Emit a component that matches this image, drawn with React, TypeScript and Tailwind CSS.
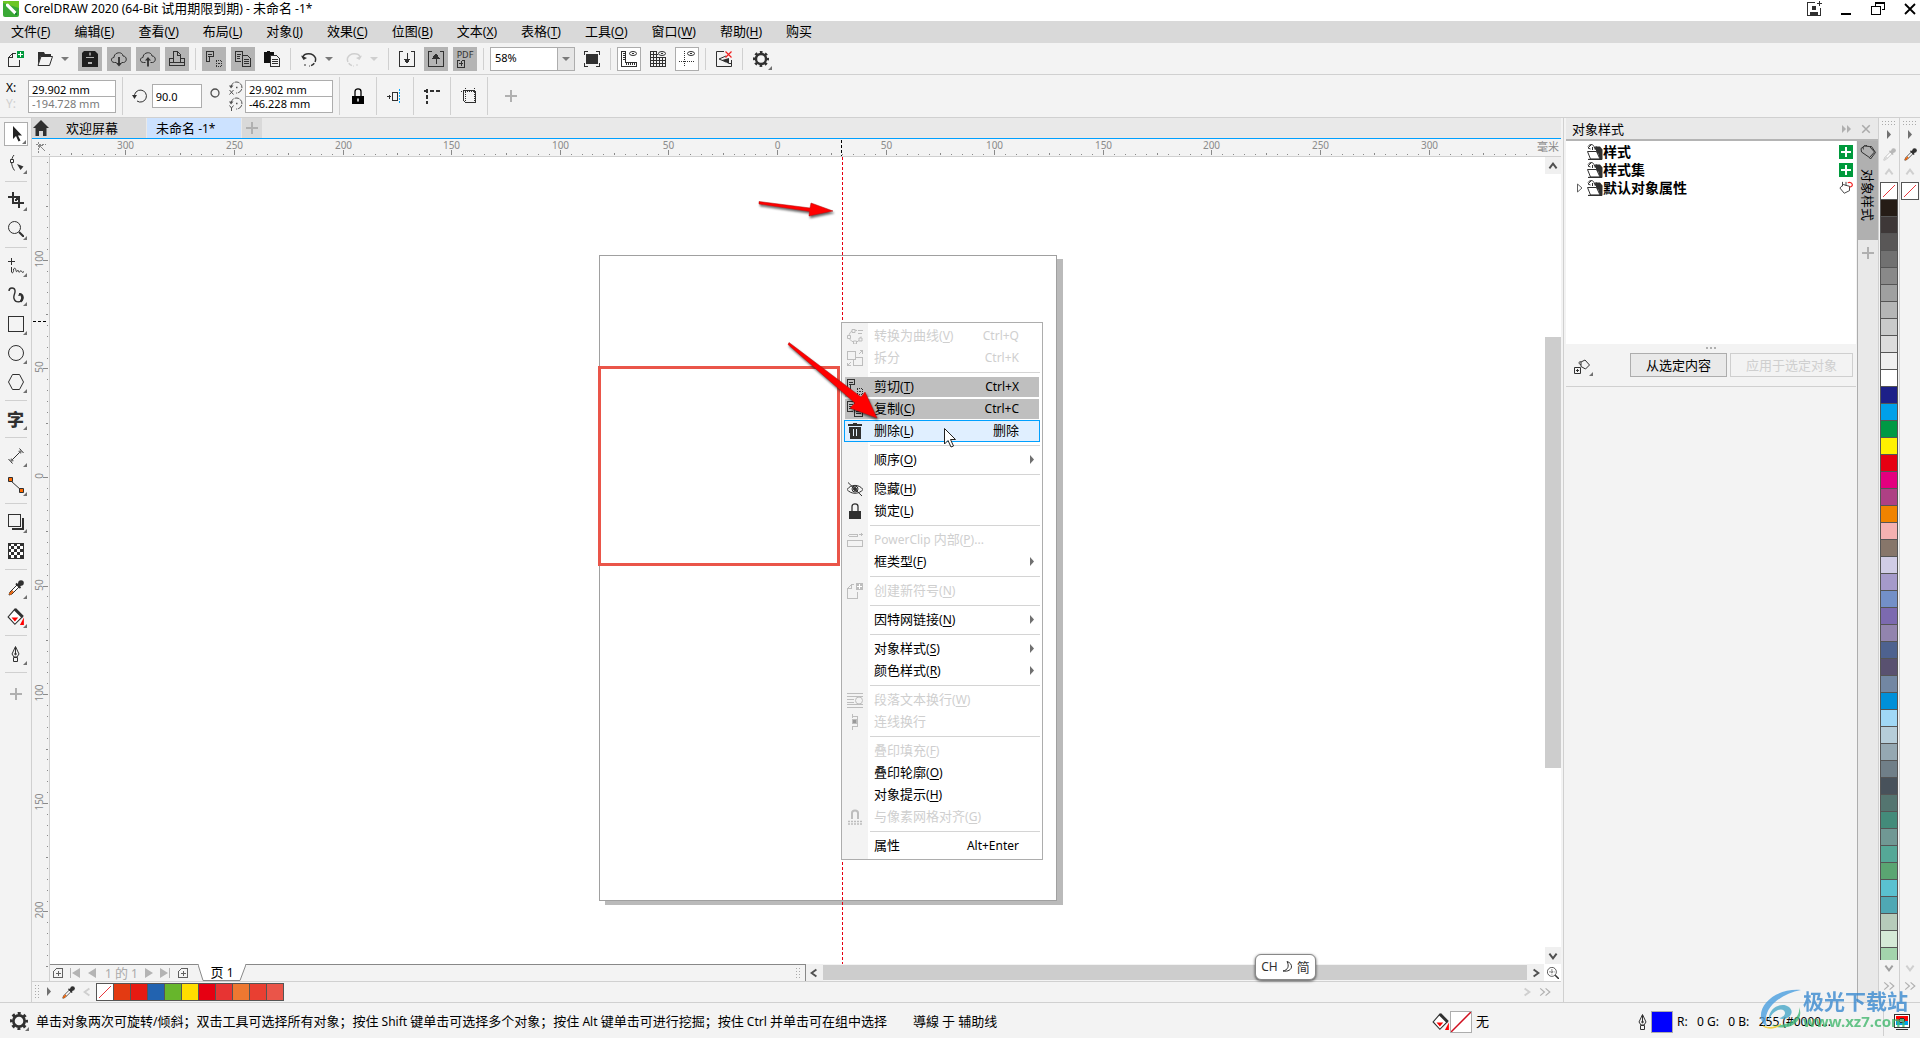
import { Fragment, type ReactNode } from "react";

const CJK = /([\u3000-\u9fff\uff00-\uffef]+)/;

const MENUS: [string, string?][] = [
  ["文件", "F"],
  ["编辑", "E"],
  ["查看", "V"],
  ["布局", "L"],
  ["对象", "J"],
  ["效果", "C"],
  ["位图", "B"],
  ["文本", "X"],
  ["表格", "T"],
  ["工具", "O"],
  ["窗口", "W"],
  ["帮助", "H"],
  ["购买"],
];

type MenuEntry = {
  label: string;
  accel?: string;
  tail?: string;
  shortcut?: string;
  icon?: ReactNode;
  state?: "disabled" | "shaded" | "active";
  submenu?: boolean;
};

const PALETTE = [
  "#251c16", "#3e3838", "#595757", "#717171", "#898989", "#9fa0a0", "#b5b6b6", "#c9caca", "#dcdcdc",
  "#efefef", "#ffffff", "#1d2088", "#00a0e9", "#009944", "#fff100", "#e60012", "#e4007f", "#ae4084",
  "#f08300", "#f4b1b1", "#87766a", "#d0cce5", "#a59aca", "#7390c8", "#7c6ab0", "#9284ae", "#4e628f",
  "#595170", "#7287a3", "#0090d9", "#a0d8f6", "#b6cdd9", "#95a8b2", "#707f88", "#48525b", "#547570",
  "#438b7a", "#709894", "#55a897", "#5aa572", "#5ac1d0", "#4fa8b4", "#b6cbba", "#d5ead7", "#a3d4ac",
];

const DOC_COLORS = ["#e33a12", "#e71a12", "#2263b0", "#67b62c", "#ffde00", "#e60012", "#e73433", "#ee7831", "#e93f32", "#ea5549"];

/* Latin runs are set one pixel smaller than the Chinese ones */
function Mixed({ text }: { text: string }) {
  return (
    <>
      {text.split(CJK).map((part, i) => (
        <span key={i} className={i % 2 ? "text-[13px]" : "text-[12px]"}>
          {part}
        </span>
      ))}
    </>
  );
}

function Accel({ label, accel, tail = "" }: { label: string; accel?: string; tail?: string }) {
  return (
    <>
      <Mixed text={label} />
      {accel && (
        <span>
          (<u className="underline-offset-2">{accel}</u>){tail}
        </span>
      )}
    </>
  );
}

function Icon({ children, size = 16, color = "#303030", crisp = false }: { children: ReactNode; size?: number; color?: string; crisp?: boolean }) {
  return (
    <svg
      width={size}
      height={size}
      viewBox="0 0 16 16"
      fill="none"
      stroke={color}
      className="block shrink-0"
      shapeRendering={crisp ? "crispEdges" : "auto"}
      aria-hidden="true"
    >
      {children}
    </svg>
  );
}

/* ---------- icons ---------- */

const CutIcon = ({ color = "#303030" }) => (
  <Icon color={color} crisp>
    <path d="M.5.5h7v5h-4v5h-3zM2 3h4M2 5h2" />
    <path d="M10 9.500h6M10.500 10v5M15.500 10v5M10 15.500h6" strokeDasharray="1 1" />
    <path d="M12 12.500h2" />
  </Icon>
);
const CopyIcon = ({ color = "#303030" }) => (
  <Icon color={color} crisp>
    <path d="M6 10.500H.5v-10h7V4M2 3.500h4M2 5.500h3M2 7.500h3" />
    <path d="M7.500 4.500h5l3 3v8h-8zM9 8.500h5M9 10.500h5M9 12.500h5" />
  </Icon>
);
const GearIcon = ({ size = 16 }: { size?: number }) => (
  <Icon size={size}>
    <circle cx="8" cy="8" r="5" strokeWidth="2.400" />
    <circle cx="8" cy="8" r="6.800" strokeWidth="2.400" strokeDasharray="2.670 2.670" strokeDashoffset="1.330" />
  </Icon>
);
const Dropper = ({ color = "#303030", tip = "#e8640c", size = 16 }) => (
  <Icon color={color} size={size}>
    <path d="M1 15 2 12l7-7 2 2-7 7z" fill="#fff" />
    <path d="M1.500 14.500 5 11" stroke={tip} strokeWidth="2.200" />
    <path d="m8 3.500 4.500 4.500" strokeWidth="1.800" />
    <circle cx="13" cy="3" r="2.800" fill={color} stroke="none" />
    <path d="m10 6 3-3" strokeWidth="3.500" />
  </Icon>
);
const BucketIcon = () => (
  <Icon size={18}>
    <path d="M7 1 1 8l6 6.500L13.500 8z" fill="#fff" />
    <path d="m7 1 7 7" strokeWidth="2.600" />
    <path d="M4 8.500h6L7 12z" fill="#f00" stroke="none" />
    <path d="M15 8.500v6.500h-3.500z" fill="#f00" stroke="none" />
  </Icon>
);
const PenIcon = () => (
  <Icon>
    <path d="M7.500.5 4 8l2 3h3l2-3zM7.500 1v7M5.500 11.500h4v4h-4z" />
    <circle cx="7.500" cy="8" r=".8" fill="#303030" />
  </Icon>
);
const TagIcon = ({ color = "#303030" }) => (
  <Icon color={color}>
    <path d="M1 3.500 4.500 1l5 .5 5 5.500-5 5.500L1.500 7z" />
    <path d="m9.500 1.500 2 0 4 6-5 6.500-1-1.500M4 4.500C1.500 3 4-.5 7 .5" />
  </Icon>
);
const LockIcon = ({ black = false }: { black?: boolean }) => (
  <Icon color={black ? "#000" : "#303030"}>
    <path d="M5 8V3.500C5 0 11 0 11 3.500V8" strokeWidth="1.300" />
    <path d="M2 8h12v8H2z" fill={black ? "#000" : "#303030"} stroke="none" />
    {black && <path d="M8 10.500v3" stroke="#fff" strokeWidth="1.500" />}
  </Icon>
);
const FolderIcon = () => (
  <Icon>
    <path d="M9 2.500h4l2.500 3v10H13L11 9H9V6l-2-1z" fill="#303030" stroke="none" />
    <path d="M.5 7.500h9l3.500 7.500H3.500z" fill="#fff" />
    <path d="M1 15.500h14" strokeWidth="1.300" />
    <path d="M1 2.500C3-.5 7 0 7.500 4M4.500.5 1 4l2.500 1M7.500 4l2-2M5.500 3v3" />
  </Icon>
);
const Chevron = ({ d, color }: { d: "up" | "down" | "left" | "right" | "double"; color: string }) => {
  const paths = {
    up: "m2 7 3-4 3 4",
    down: "m2 3 3 4 3-4",
    left: "M7 2 3 5l4 3",
    right: "m3 2 4 3-4 3",
    double: "m1 2 3.500 3L1 8m4.500-6L9 5 5.500 8",
  };
  return (
    <svg width="12" height="12" viewBox="0 0 10 10" fill="none" stroke={color} strokeWidth={d === "double" ? 1 : 1.6} className="shrink-0">
      <path d={paths[d]} />
    </svg>
  );
};
const Triangle = ({ color = "#707070" }) => (
  <svg width="6" height="10" viewBox="0 0 6 10" fill={color} className="shrink-0">
    <path d="M1 0v9l4-4.500z" />
  </svg>
);
const NoneMark = ({ color = "#e8383d" }) => (
  <svg width="100%" height="100%" viewBox="0 0 16 16" preserveAspectRatio="none" stroke={color}>
    <path d="M2 14 14 2" />
  </svg>
);
const PlusIcon = () => (
  <Icon color="#b0b0b0" crisp size={14}>
    <path d="M8 1v14M1 8h14" strokeWidth="2" />
  </Icon>
);
const Corner = () => (
  <svg width="4" height="4" viewBox="0 0 4 4" className="absolute right-px bottom-px" fill="#707070">
    <path d="M4 0v4H0z" />
  </svg>
);

/* ---------- small controls ---------- */

function ToolButton({ label, tone = "plain", corner, children }: { label: string; tone?: "plain" | "shaded" | "boxed"; corner?: boolean; children: ReactNode }) {
  const look = { plain: "", shaded: "bg-[#b4b4b4]", boxed: "border border-[#adadad] bg-white" }[tone];
  return (
    <button aria-label={label} className={`relative flex size-6 shrink-0 items-center justify-center ${look}`}>
      {children}
      {corner && <Corner />}
    </button>
  );
}

function Caret({ color = "#7a7a7a" }) {
  return (
    <span className="flex w-4 justify-center">
      <svg width="8" height="4" viewBox="0 0 8 4" fill={color}>
        <path d="M0 0h8L4 4z" />
      </svg>
    </span>
  );
}

const VSep = () => <span className="mx-px h-[22px] w-px shrink-0 bg-[#d0d0d0]" />;
const HSep = () => <span className="my-px h-px w-[22px] shrink-0 bg-[#d0d0d0]" />;

function Field({ label, value, className = "" }: { label: string; value: string; className?: string }) {
  return (
    <input
      aria-label={label}
      defaultValue={value}
      className={`w-full border-[#adadad] bg-white px-[3px] text-[11px] outline-none ${className}`}
    />
  );
}

function TitleBar() {
  return (
    <header className="flex h-[21px] shrink-0 items-center bg-white pb-1 pl-[3px]">
      <svg width="16" height="16" viewBox="0 0 16 16" className="mr-[5px]">
        <rect width="16" height="16" rx="2" fill="#3aa935" />
        <path d="M0 0h16v7L0 2z" fill="#6cc624" />
        <path d="m3 3 2-.5 8.500 8.500-2 2.500L3 5z" fill="#fff" />
        <path d="m11.500 13.500 2-2.500.5 3z" fill="#0b7a2f" />
      </svg>
      <h1 className="flex-1 leading-4">
        <Mixed text="CorelDRAW 2020 (64-Bit 试用期限到期) - 未命名 -1*" />
      </h1>
      <div className="flex items-center gap-4 pr-0.5">
        <button aria-label="账户">
          <Icon crisp>
            <path d="M9 1.500H1.500v13h13V7" />
            <path d="M6 5h4v4H6zM4 11h8v3H4z" fill="#303030" stroke="none" />
            <path d="M13.500 0v5M11 2.500h5" />
          </Icon>
        </button>
        <button aria-label="最小化">
          <Icon crisp color="#000">
            <path d="M3 13h10" strokeWidth="2" />
          </Icon>
        </button>
        <button aria-label="还原">
          <Icon crisp color="#000">
            <path d="M5.500 4.500v-3h9v7h-3M1.500 5.500h9v8h-9zM5 2.500h10" />
          </Icon>
        </button>
        <button aria-label="关闭">
          <Icon color="#000">
            <path d="m3 3 10 10M13 3 3 13" strokeWidth="1.800" />
          </Icon>
        </button>
      </div>
    </header>
  );
}

function StandardBar() {
  return (
    <div role="toolbar" aria-label="标准" className="flex h-8 shrink-0 items-center gap-[5px] border-b border-[#d0d0d0] pl-1">
      <ToolButton label="新建">
        <Icon crisp>
          <path d="M8 2.500H4.500l-4 4v9h11V9M4.500 2v4.500H0" />
          <path d="M9 0h7v7H9z" fill="#009a3d" stroke="none" />
          <path d="M12.500 1v5M10 3.500h5" stroke="#fff" />
        </Icon>
      </ToolButton>
      <div className="flex items-center">
        <ToolButton label="打开">
          <Icon>
            <path d="M1 1h6l1 2h6v2H4L1 14z" fill="#303030" stroke="none" />
            <path d="M4 5.500h11.500l-3 9H1z" />
          </Icon>
        </ToolButton>
        <Caret />
      </div>
      <ToolButton label="保存" tone="shaded">
        <Icon>
          <path d="M2 0h11l3 3v13H0V2z" fill="#1e1e1e" stroke="none" />
          <path d="M4 6.500h8" stroke="#b4b4b4" />
          <path d="M8 1.500v3" stroke="#b4b4b4" strokeWidth="1.500" />
          <path d="M6 11h4v2H6z" fill="#b4b4b4" stroke="none" />
        </Icon>
      </ToolButton>
      <ToolButton label="从云打开" tone="shaded">
        <Icon>
          <path d="M5.500 11.500H3.500c-4 0-4-5-.5-5 0-5.500 8.500-6.500 9-1.500 4 0 4.500 6 .5 6.500h-2" />
          <path d="M8 6v8" strokeWidth="1.800" />
          <path d="m5 12 3 3.500 3-3.500z" fill="#303030" stroke="none" />
        </Icon>
      </ToolButton>
      <ToolButton label="保存到云" tone="shaded">
        <Icon>
          <path d="M5.500 11.500H3.500c-4 0-4-5-.5-5 0-5.500 8.500-6.500 9-1.500 4 0 4.500 6 .5 6.500h-2" />
          <path d="M8 8v7.500" strokeWidth="1.800" />
          <path d="m5 9.500 3-3.500 3 3.500z" fill="#303030" stroke="none" />
        </Icon>
      </ToolButton>
      <ToolButton label="打印" tone="shaded">
        <Icon crisp>
          <path d="M4.500 11.500V.5h4l3 3v8M8.500 1v3H11M4 7.500H.5v7h15v-7H12M.5 11.500h15" />
        </Icon>
      </ToolButton>
      <VSep />
      <ToolButton label="剪切" tone="shaded">
        <CutIcon />
      </ToolButton>
      <ToolButton label="复制" tone="shaded">
        <CopyIcon />
      </ToolButton>
      <ToolButton label="粘贴">
        <Icon crisp>
          <path d="M0 1h3V0h3v1h4v3H6v8H0z" fill="#111" stroke="none" />
          <path d="M6.500 4.500h6l3 3v8h-9zM8 8.500h6M8 10.500h6M8 12.500h6" />
        </Icon>
      </ToolButton>
      <VSep />
      <div className="flex items-center">
        <ToolButton label="撤消">
          <Icon>
            <path d="M1.500 6.500C3 1.500 12 1 14.500 7" strokeWidth="1.500" />
            <path d="M14.500 7c1 5-3.500 8-6.500 8" strokeWidth="1.500" strokeDasharray="4 1.500" />
            <path d="M3 14h3" strokeDasharray="2 1" />
            <path d="M0 4.500 6 7 2.500 9z" fill="#303030" stroke="none" />
          </Icon>
        </ToolButton>
        <Caret />
      </div>
      <div className="flex items-center">
        <ToolButton label="重做">
          <Icon color="#cfcfcf">
            <path d="M14.500 6.500C13 1.500 4 1 1.500 7" strokeWidth="1.500" />
            <path d="M1.500 7c-1 5 3.500 8 6.500 8" strokeWidth="1.500" strokeDasharray="4 1.500" />
            <path d="M10 14h3" strokeDasharray="2 1" />
            <path d="m16 4.500-6 2.500L13.500 9z" fill="#cfcfcf" stroke="none" />
          </Icon>
        </ToolButton>
        <Caret color="#cfcfcf" />
      </div>
      <VSep />
      <ToolButton label="导入">
        <Icon crisp>
          <path d="M4 .5H.5v15h15V.5H12M8 2v8" />
          <path d="M5 8h6l-3 4z" fill="#303030" />
        </Icon>
      </ToolButton>
      <ToolButton label="导出" tone="shaded">
        <Icon crisp>
          <path d="M4 .5H.5v15h15V.5H12M8 5v8" />
          <path d="M5 7h6L8 3z" fill="#303030" />
        </Icon>
      </ToolButton>
      <button aria-label="发布为 PDF" className="flex size-6 flex-col items-center bg-[#b4b4b4] pt-1">
        <span className="text-[9px] leading-2 text-[#303030]">PDF</span>
        <svg width="16" height="9" viewBox="0 0 16 9" fill="none" stroke="#303030" shapeRendering="crispEdges">
          <path d="M3 1.500H.5v7h7v-7H5M4 2v5M2 4.500h4" />
        </svg>
      </button>
      <VSep />
      <label className="relative flex h-6 items-center">
        <select aria-label="缩放级别" defaultValue="58" className="h-6 w-[85px] appearance-none border border-[#adadad] bg-white pl-1 text-[11px]">
          <option value="58">58%</option>
          <option value="100">100%</option>
        </select>
        <span className="pointer-events-none absolute right-px flex h-[22px] items-center border-l border-[#adadad] bg-[#e6e6e6]">
          <Caret />
        </span>
      </label>
      <ToolButton label="全屏预览">
        <Icon crisp>
          <path d="M4 .5H.5V4M12 .5h3.500V4M4 15.500H.5V12M12 15.500h3.500V12" />
          <path d="M2 3h12v10H2z" fill="#303030" stroke="none" />
        </Icon>
      </ToolButton>
      <VSep />
      <ToolButton label="显示标尺" tone="boxed">
        <Icon crisp>
          <path d="M.5.5h4v11h11v4H.5zM2 2.500h2M2 4.500h2M2 6.500h2M2 8.500h2M5.500 12v2M7.500 12v2M9.500 12v2M11.500 12v2M13.500 12v2" />
          <ellipse cx="12" cy="2.500" rx="3.500" ry="2" shapeRendering="auto" />
          <path d="M11 2.500h2" />
        </Icon>
      </ToolButton>
      <ToolButton label="显示网格">
        <Icon crisp>
          <path d="M.5 0v15.500H16M3.500 0v16M6.500 0v16M9.500 6v10M12.500 6v10M15.500 6v10M0 .5h7M0 3.500h8M0 6.500h16M0 9.500h16M0 12.500h16" />
          <ellipse cx="12" cy="2.500" rx="3.500" ry="2" shapeRendering="auto" />
          <path d="M11 2.500h2" />
        </Icon>
      </ToolButton>
      <ToolButton label="显示辅助线" tone="boxed">
        <Icon crisp>
          <path d="M5.500 0v16M0 10.500h16" strokeDasharray="1 1" />
          <ellipse cx="12" cy="2.500" rx="3.500" ry="2" shapeRendering="auto" />
          <path d="M11 2.500h2" />
        </Icon>
      </ToolButton>
      <VSep />
      <ToolButton label="关闭贴齐">
        <Icon>
          <path d="M8 .5H.5v15h15V9M13 12.500h2" />
          <path d="m3 8 7-3M3 8l7 3" />
          <path d="M13 7v6L6 9z" fill="#303030" stroke="none" />
          <path d="m9.500.5 6 6M15.500.5l-6 6" stroke="#f02020" strokeWidth="1.200" />
        </Icon>
      </ToolButton>
      <VSep />
      <ToolButton label="选项" corner>
        <GearIcon />
      </ToolButton>
    </div>
  );
}

const PropSep = () => <span className="h-[38px] w-px shrink-0 bg-[#d0d0d0]" />;

function PropertyBar() {
  return (
    <div role="toolbar" aria-label="属性栏" className="flex h-[43px] shrink-0 items-center border-b border-[#d0d0d0]">
      <div className="grid w-7 grid-rows-2 pl-1.5 leading-4">
        <span>X:</span>
        <span className="text-[#cfcfcf]">Y:</span>
      </div>
      <div className="grid w-[88px] pt-px">
        <Field label="X" value="29.902 mm" className="h-[17px] border pt-px" />
        <Field label="Y" value="-194.728 mm" className="h-4 border border-t-0 text-[#7a7a7a]" />
      </div>
      <div className="flex w-[217px] items-center justify-between pl-1.5">
        <PropSep />
        <label className="flex items-center gap-1">
          <Icon>
            <path d="M2.500 9A6 6 0 1 1 5 13" />
            <path d="M0 7h5l-2.500 4z" fill="#303030" stroke="none" />
          </Icon>
          <span className="block w-[50px]">
            <Field label="旋转角度" value="90.0" className="h-6 border" />
          </span>
        </label>
        <svg width="10" height="10" viewBox="0 0 10 10" fill="none" stroke="#505050" strokeWidth="1.300" className="mb-1.5">
          <circle cx="5" cy="5" r="4" />
        </svg>
        <div className="flex items-center gap-0.5">
          <div className="grid gap-0.5">
            {["X", "Y"].map((axis) => (
              <svg key={axis} width="14" height="14" viewBox="0 0 14 14" fill="none" stroke="#505050">
                <path d="M2 6a5.500 5.500 0 1 1 5 6" strokeDasharray="5 1" />
                <path d="M0 4.500h4.500L2 7.500z" fill="#505050" stroke="none" />
                <path d="M7 6.500h1.500" strokeWidth="1.500" />
                <path d={axis === "X" ? "m.5 9 4 4.500M4.500 9l-4 4.500" : "m.5 8.500 2 2.500 2-2.500M2.500 11v3"} />
              </svg>
            ))}
          </div>
          <div className="grid w-[88px] pt-px">
            <Field label="旋转中心 X" value="29.902 mm" className="h-[17px] border pt-px" />
            <Field label="旋转中心 Y" value="-46.228 mm" className="h-4 border border-t-0" />
          </div>
        </div>
      </div>
      <div className="flex items-center gap-1.5 pl-1.5">
        <PropSep />
        <ToolButton label="锁定辅助线">
          <LockIcon black />
        </ToolButton>
        <PropSep />
        <ToolButton label="贴齐辅助线">
          <Icon crisp>
            <path d="M0 8.500h4M2.500 6.500v4M5.500 4.500h5v8h-5z" />
            <path d="M12.500 1v15" stroke="#00a8ff" strokeDasharray="2 1" />
          </Icon>
        </ToolButton>
        <PropSep />
        <ToolButton label="预设辅助线">
          <Icon crisp>
            <path d="M0 3h16M3 1v15" strokeWidth="2" strokeDasharray="4 2" />
          </Icon>
        </ToolButton>
        <PropSep />
        <ToolButton label="页面边界">
          <Icon crisp>
            <path d="M2.500 2.500h11l1 2v10h-10l-2-2z" />
            <path d="M0 3.500h16M4.500 0v16M13.500 0v16" strokeDasharray="1 1" />
          </Icon>
        </ToolButton>
        <PropSep />
        <ToolButton label="添加">
          <span className="pl-2.5">
            <PlusIcon />
          </span>
        </ToolButton>
      </div>
    </div>
  );
}

function Toolbox() {
  return (
    <nav aria-label="工具箱" className="flex w-8 shrink-0 flex-col items-center gap-[5px] border-r border-[#d0d0d0] pt-1">
      <ToolButton label="选择工具" tone="boxed" corner>
        <Icon>
          <path d="M5 0v13l3-3 2.500 5.500 2-1L10 9.500h4z" fill="#222" stroke="none" />
        </Icon>
      </ToolButton>
      <ToolButton label="形状工具" corner>
        <Icon>
          <path d="M6 0C2.500 4 3 11 6.500 15.500" />
          <path d="M2.500 4.500h3v3h-3z" fill="#fff" />
          <path d="m9 9 6.500 2.500L12.500 15z" fill="#303030" stroke="none" />
        </Icon>
      </ToolButton>
      <HSep />
      <ToolButton label="裁剪工具" corner>
        <Icon crisp>
          <path d="M0 5h11v11M5 0v11h11M7 9l4-4" strokeWidth="2" />
        </Icon>
      </ToolButton>
      <ToolButton label="缩放工具" corner>
        <Icon>
          <circle cx="6.500" cy="6.500" r="6" />
          <path d="m11 11 5 5" strokeWidth="2" />
        </Icon>
      </ToolButton>
      <HSep />
      <ToolButton label="手绘工具" corner>
        <Icon>
          <path d="M3.500 0v7M0 3.500h7" />
          <path d="M3.500 9v5c1 2 2.500 0 2-3 3-3 2 4 3.500 2.500 2-4 1 3 3 0s1 3 4 0" />
        </Icon>
      </ToolButton>
      <ToolButton label="艺术笔" corner>
        <Icon>
          <path d="M1 4c0-4 5.500-4 6-.5.5 3-2 5-1 8 1.500 5 8.500 4 9-.5.500-4-4-5.500-4-2" strokeWidth="1.400" />
          <path d="M11 7c4 0 4 6 1.500 7.500" strokeWidth="2.200" />
        </Icon>
      </ToolButton>
      <ToolButton label="矩形工具" corner>
        <Icon crisp>
          <path d="M.5.5h15v15H.5z" />
        </Icon>
      </ToolButton>
      <ToolButton label="椭圆形工具" corner>
        <Icon>
          <circle cx="8" cy="8" r="7.500" />
        </Icon>
      </ToolButton>
      <ToolButton label="多边形工具" corner>
        <Icon>
          <path d="M4.500.5h7l4 7.500-4 7.500h-7L.5 8z" />
        </Icon>
      </ToolButton>
      <HSep />
      <ToolButton label="文本工具" corner>
        <span className="text-[17px] leading-none font-black text-[#303030]">字</span>
      </ToolButton>
      <HSep />
      <ToolButton label="平行度量工具" corner>
        <Icon>
          <path d="M3 13 13 3M.5 11l4 4.500M11.500.5l4 4.500" />
          <path d="m2 14 1-4 3 3zM14 2l-4 1 3 3z" fill="#777" stroke="none" />
        </Icon>
      </ToolButton>
      <ToolButton label="直线连接器" corner>
        <Icon>
          <path d="m3 4 10 9" />
          <path d="M.5.500h4v4h-4zM11.500 11.500h4v4h-4z" fill="#ff6a00" />
        </Icon>
      </ToolButton>
      <HSep />
      <ToolButton label="阴影工具" corner>
        <Icon crisp>
          <path d="M.5.5h12v12H.5z" />
          <path d="M15 4v11H4" strokeWidth="2" />
        </Icon>
      </ToolButton>
      <ToolButton label="透明度工具">
        <Icon crisp>
          <path d="M.5.5h15v15H.5z" fill="#fff" />
          <path d="M0 1.500h16M0 7.500h16M0 13.500h16" strokeWidth="3" strokeDasharray="3 3" />
          <path d="M3 4.500h13M3 10.500h13" strokeWidth="3" strokeDasharray="3 3" />
        </Icon>
      </ToolButton>
      <HSep />
      <ToolButton label="颜色滴管工具" corner>
        <Dropper />
      </ToolButton>
      <ToolButton label="交互式填充工具" corner>
        <BucketIcon />
      </ToolButton>
      <HSep />
      <ToolButton label="轮廓笔" corner>
        <PenIcon />
      </ToolButton>
      <HSep />
      <button aria-label="自定义工具箱" className="mt-2">
        <PlusIcon />
      </button>
    </nav>
  );
}

/* one tick stands for 5 mm */
const TICK = 10.86;
const tickSize = (t: number) => (t % 10 === 0 ? 5 : t % 5 === 0 ? 2 : 1);

function HorizontalRuler() {
  const ticks = Array.from({ length: 138 }, (_, i) => i - 67);
  return (
    <svg className="h-[18px] w-full" fontSize="10" fill="#8a8a8a">
      {ticks.map((t) => {
        const x = Math.round(745 + t * TICK);
        const h = tickSize(t);
        return (
          <g key={t}>
            <rect x={x} y={16 - h} width={1} height={h} />
            {h === 5 && Math.abs(t) <= 60 && (
              <text x={x + 0.5} y={10} textAnchor="middle">
                {Math.abs(t * 5)}
              </text>
            )}
          </g>
        );
      })}
      <path d="M809.500 1v16" stroke="#000" strokeDasharray="3 2" />
      <g fill="none" stroke="#8a8a8a" shapeRendering="crispEdges">
        <path d="M4 5.500h10M6.500 3v12" strokeDasharray="2 1" />
        <path d="m7 6 6 6M7 9V6h4" />
      </g>
    </svg>
  );
}

function VerticalRuler() {
  const ticks = Array.from({ length: 75 }, (_, i) => i - 29);
  return (
    <svg className="h-full w-[17px] shrink-0" fontSize="10" fill="#8a8a8a">
      {ticks.map((t) => {
        const y = Math.round(320 + t * TICK);
        const w = tickSize(t);
        return (
          <g key={t}>
            <rect x={16 - w} y={y} width={w} height={1} />
            {w === 5 && (
              <text transform={`translate(11 ${y - 1}) rotate(-90)`} textAnchor="middle">
                {Math.abs(t * 5)}
              </text>
            )}
          </g>
        );
      })}
      <path d="M1 164.500h15" stroke="#000" strokeDasharray="3 2" />
    </svg>
  );
}

const GREY = "#bdbdbd";

const GROUPS: MenuEntry[][] = [
  [
    {
      label: "转换为曲线",
      accel: "V",
      shortcut: "Ctrl+Q",
      state: "disabled",
      icon: (
        <Icon color={GREY}>
          <path d="M10 2.500a6 6 0 1 0 4 6" />
          <path d="M.5 7.500h3v3h-3zM6.500 13h3v3h-3zM12 10h3v3h-3zM5 1.500h3v3H5z" fill="#f3f3f3" />
          <path d="M11 2.500h5M11 5.500h4" />
        </Icon>
      ),
    },
    {
      label: "拆分",
      shortcut: "Ctrl+K",
      state: "disabled",
      icon: (
        <Icon color={GREY} crisp>
          <path d="M4.500 1.500h-4v8h8v-8zM6.500 9v6.500h9V7H9M12 4l3-3M12.500.5h3V4M4 12l-3 3M.5 12.500v3H4" />
        </Icon>
      ),
    },
  ],
  [
    { label: "剪切", accel: "T", shortcut: "Ctrl+X", state: "shaded", icon: <CutIcon /> },
    { label: "复制", accel: "C", shortcut: "Ctrl+C", state: "shaded", icon: <CopyIcon /> },
    {
      label: "删除",
      accel: "L",
      shortcut: "删除",
      state: "active",
      icon: (
        <Icon crisp>
          <path d="M6 0h4v1h5v2H1V1h5zM2 4h12v12H3z" fill="#303030" stroke="none" />
          <path d="M6.500 6v7M9.500 6v7" stroke="#e5f1fd" />
        </Icon>
      ),
    },
  ],
  [{ label: "顺序", accel: "O", submenu: true }],
  [
    {
      label: "隐藏",
      accel: "H",
      icon: (
        <Icon>
          <path d="M0 8.500c4-5.500 12-5.500 16 0-4 5-12 5-16 0zM1 1.500l14 13.500" />
          <circle cx="8" cy="8" r="3" />
          <circle cx="8" cy="8" r="1.500" fill="#303030" />
        </Icon>
      ),
    },
    { label: "锁定", accel: "L", icon: <LockIcon /> },
  ],
  [
    {
      label: "PowerClip 内部",
      accel: "P",
      tail: "...",
      state: "disabled",
      icon: (
        <Icon color={GREY} crisp>
          <path d="M.5 8.500h15v6H.5zM12 2.500h4M14.500 1v3" />
          <ellipse cx="6" cy="3.500" rx="4.500" ry="1.500" />
        </Icon>
      ),
    },
    { label: "框类型", accel: "F", submenu: true },
  ],
  [
    {
      label: "创建新符号",
      accel: "N",
      state: "disabled",
      icon: (
        <Icon color={GREY} crisp>
          <path d="M7 1.500H4.500l-4 4v10h10V9M4.500 2v3.500H1" />
          <path d="M9 0h7v7H9z" fill={GREY} stroke="none" />
          <path d="M12.500 1v5M10 3.500h5" stroke="#fff" />
        </Icon>
      ),
    },
  ],
  [{ label: "因特网链接", accel: "N", submenu: true }],
  [
    { label: "对象样式", accel: "S", submenu: true },
    { label: "颜色样式", accel: "R", submenu: true },
  ],
  [
    {
      label: "段落文本换行",
      accel: "W",
      state: "disabled",
      icon: (
        <Icon color={GREY}>
          <path d="M0 1.500h16M0 4.500h16M0 7.500h7M0 10.500h7M0 12.500h16M0 15.500h16" shapeRendering="crispEdges" />
          <circle cx="12" cy="8.500" r="3.500" fill="#f3f3f3" />
        </Icon>
      ),
    },
    {
      label: "连线换行",
      state: "disabled",
      icon: (
        <Icon color={GREY} crisp>
          <path d="M5.500 0v4M5.500 12v4M5.500 2.500h5v10h-5" />
          <path d="M5.500 5.500h4v4h-4z" fill="#999" />
        </Icon>
      ),
    },
  ],
  [
    { label: "叠印填充", accel: "F", state: "disabled" },
    { label: "叠印轮廓", accel: "O" },
    { label: "对象提示", accel: "H" },
    {
      label: "与像素网格对齐",
      accel: "G",
      state: "disabled",
      icon: (
        <Icon color={GREY}>
          <path d="M5 10V4c0-3.500 6-3.500 6 0v6" strokeWidth="2" />
          <path d="M1 12.500h14M1 15h14" strokeDasharray="2 1" strokeWidth="1.500" />
        </Icon>
      ),
    },
  ],
  [{ label: "属性", shortcut: "Alt+Enter" }],
];

function ContextMenu() {
  return (
    <div role="menu" className="absolute top-[165px] left-[791px] w-[202px] border border-[#adadad] bg-linear-to-r from-[#f3f3f3] from-[26px] to-white to-[26px] p-0.5">
      {GROUPS.map((group, i) => (
        <Fragment key={i}>
          {i > 0 && <div className="my-[3px] ml-[26px] h-px bg-[#d4d4d4]" />}
          {group.map((item) => {
            const bg = item.state === "active" ? "border-[#00a0ff] bg-[#e0efff]" : item.state === "shaded" ? "border-transparent bg-[#bfbfbf] bg-clip-padding" : "border-transparent";
            return (
              <button
                key={item.label}
                role="menuitem"
                className={`flex h-[22px] w-full items-center border pr-1 pb-px pl-0.5 leading-5 ${bg} ${item.state === "disabled" ? "text-[#cfcfcf]" : "text-black"}`}
              >
                <span className="mr-[11px] size-4 shrink-0">{item.icon}</span>
                <span className="flex-1 text-left whitespace-nowrap">
                  <Accel label={item.label} accel={item.accel} tail={item.tail} />
                </span>
                {item.shortcut && (
                  <span className="pr-4">
                    <Mixed text={item.shortcut} />
                  </span>
                )}
                {item.submenu && <Triangle />}
              </button>
            );
          })}
        </Fragment>
      ))}
    </div>
  );
}

function Canvas() {
  return (
    <div className="relative min-w-0 flex-1 overflow-hidden bg-white">
      <div className="absolute top-[98px] left-[549px] h-[646px] w-[458px] border border-[#a0a0a0] bg-white shadow-[6px_4px_0_0_#bababa]" />
      <div className="absolute top-[209px] left-[548px] h-[200px] w-[242px] border-3 border-[#ea5549]" />
      <div className="absolute inset-y-0 left-[792px] w-px bg-[repeating-linear-gradient(#e60012_0_3px,transparent_3px_5px)]" />
      <ContextMenu />
      <svg
        width="200"
        height="250"
        viewBox="0 0 200 250"
        fill="#f00"
        stroke="#b01010"
        strokeWidth="0.500"
        className="pointer-events-none absolute top-[30px] left-[700px] drop-shadow-[1px_2px_1px_rgba(0,0,0,0.6)]"
      >
        <path d="M9 14.500 60 21l1-5 22 8-24 5 .5-4.500L9 17z" />
        <path d="M39 155.500 111 210l4-5 12 26-27-10 5-5-67-58.500z" />
      </svg>
      <svg width="14" height="21" viewBox="0 0 14 21" className="absolute top-[271px] left-[894px]">
        <path d="M.5.5v15.500l3.500-3.500 3 6.500 2.500-1-3-6.500h5z" fill="#fff" stroke="#222" />
      </svg>
    </div>
  );
}

function Workspace() {
  return (
    <main className="flex min-w-0 flex-1 flex-col">
      <div role="tablist" className="flex h-[21px] shrink-0 border-b border-[#00a0ff] bg-[#e9e9e9] leading-[18px]">
        <button aria-label="主页" className="flex w-[18px] items-center justify-center bg-[#d9d9d9]">
          <Icon>
            <path d="m8 0 8 8h-2.500v8H10v-5H6v5H2.500V8H0z" fill="#303030" stroke="none" />
          </Icon>
        </button>
        <button role="tab" className="mr-px w-24 bg-[#d9d9d9] pl-4 text-left">
          <Mixed text="欢迎屏幕" />
        </button>
        <button role="tab" aria-selected="true" className="mr-px w-[94px] bg-[#cce2ff] pl-[9px] text-left">
          <Mixed text="未命名 -1*" />
        </button>
        <button aria-label="新建文档" className="flex w-5 items-center justify-center bg-[#d9d9d9]">
          <PlusIcon />
        </button>
      </div>
      <div className="flex h-[18px] shrink-0 items-start overflow-hidden border-b border-[#d0d0d0]">
        <div className="min-w-0 flex-1">
          <HorizontalRuler />
        </div>
        <span className="w-6 text-[11px] leading-[15px] whitespace-nowrap text-[#8a8a8a]">毫米</span>
      </div>
      <div className="flex min-h-0 flex-1">
        <div className="w-[18px] shrink-0 overflow-hidden border-r border-[#d0d0d0]">
          <VerticalRuler />
        </div>
        <div className="flex min-w-0 flex-1 flex-col">
          <div className="flex min-h-0 flex-1">
            <Canvas />
            <div className="flex w-4 shrink-0 flex-col bg-white">
              <button aria-label="向上滚动" className="flex h-[17px] items-center justify-center bg-[#f0f0f0]">
                <Chevron d="up" color="#505050" />
              </button>
              <div className="flex-[163]" />
              <div className="flex-[431] bg-[#cdcdcd]" />
              <div className="flex-[179]" />
              <button aria-label="向下滚动" className="flex h-[17px] items-center justify-center bg-[#f0f0f0]">
                <Chevron d="down" color="#505050" />
              </button>
            </div>
          </div>
          <div className="flex h-[17px] shrink-0">
            <div className="flex w-1/2 items-center border-t border-r border-[#888] pr-1 text-[#aaa]">
              <button aria-label="在前面添加页" className="mr-1.5 ml-[3px]">
                <PageAdd />
              </button>
              <svg width="30" height="10" viewBox="0 0 30 10" fill="#b4b4b4">
                <path d="M1 0h1v10H1zM11 0v10L3 5zM27 0v10l-8-5z" />
              </svg>
              <span className="w-[45px] text-center leading-[15px]">
                <Mixed text="1 的 1" />
              </span>
              <svg width="28" height="10" viewBox="0 0 28 10" fill="#b4b4b4">
                <path d="M1 0v10l8-5zM16 0v10l8-5zM25 0h1v10h-1z" />
              </svg>
              <button aria-label="在后面添加页" className="ml-1.5">
                <PageAdd />
              </button>
              <button role="tab" className="relative -mt-px ml-2.5 h-[17px] w-12 text-black">
                <svg viewBox="0 0 48 17" className="absolute inset-0 h-full w-full" fill="#fff" stroke="#888">
                  <path d="M0 .5 5 16.500h37L48 .5" />
                  <path d="M1 .5h46" stroke="#fff" />
                </svg>
                <span className="relative block leading-[15px]">
                  <Mixed text="页 1" />
                </span>
              </button>
              <Grip className="ml-auto h-3 w-1.5" />
            </div>
            <button aria-label="向左滚动" className="flex w-[17px] items-center justify-center bg-[#f0f0f0]">
              <Chevron d="left" color="#505050" />
            </button>
            <div className="mt-px mb-px flex-1 bg-[#cdcdcd]" />
            <button aria-label="向右滚动" className="flex w-[17px] items-center justify-center bg-[#f0f0f0]">
              <Chevron d="right" color="#505050" />
            </button>
            <button aria-label="导航器" className="flex w-[17px] items-center justify-center bg-white">
              <Icon size={12}>
                <circle cx="6.500" cy="6.500" r="6" />
                <path d="m11 11 5 5" strokeWidth="2" />
                <path d="M6.500 3v7M3 6.500h7" strokeDasharray="2 1" />
              </Icon>
            </button>
          </div>
        </div>
      </div>
      <div className="flex h-[21px] shrink-0 items-center border-t border-[#d0d0d0]">
        <Grip className="mr-1.5 ml-0.5 h-4 w-1.5" />
        <Triangle />
        <span className="mr-1.5 ml-2.5">
          <Dropper size={13} />
        </span>
        <Chevron d="left" color="#cfcfcf" />
        <div className="ml-[3px] flex border border-[#555]">
          <button aria-label="无" className="h-4 w-4 bg-white">
            <NoneMark />
          </button>
          {DOC_COLORS.map((c) => (
            <button key={c} aria-label={c} className="h-4 w-[17px] border-l border-[#555]" style={{ background: c }} />
          ))}
        </div>
        <span className="ml-auto flex gap-1.5 pr-2.5">
          <Chevron d="right" color="#cfcfcf" />
          <Chevron d="double" color="#b0b0b0" />
        </span>
      </div>
    </main>
  );
}

function PageAdd() {
  return (
    <svg width="10" height="11" viewBox="0 0 10 11" fill="none" stroke="#606060" className="block" shapeRendering="crispEdges">
      <path d="M3.500.5h6v9h-9v-6zM5 3v5M3 5.500h5" />
    </svg>
  );
}

function Grip({ className }: { className: string }) {
  return <span className={`block shrink-0 bg-[radial-gradient(#aaa_0.7px,transparent_1px)] bg-size-[3px_3px] ${className}`} />;
}

function ObjectStyles() {
  return (
    <aside className="ml-0.5 flex w-[315px] shrink-0 flex-col border-l border-[#d0d0d0] pl-0.5">
      <div className="flex h-[23px] shrink-0 items-center border-b-2 border-[#b4b4b4] bg-[#e9e9e9] pr-1.5 pl-1.5">
        <h2 className="flex-1 text-[13px] leading-5">对象样式</h2>
        <svg width="10" height="8" viewBox="0 0 10 8" fill="#b0b0b0" className="mr-2">
          <path d="m0 0 4 4-4 4zM5 0l4 4-4 4z" />
        </svg>
        <Icon size={12} color="#aaa">
          <path d="m3 3 10 10M13 3 3 13" strokeWidth="2" />
        </Icon>
      </div>
      <div className="flex min-h-0 flex-1">
        <div className="flex min-w-0 flex-1 flex-col">
          <ul className="h-[203px] shrink-0 bg-white pt-0.5 text-[14px] leading-[18px] font-bold">
            {["样式", "样式集", "默认对象属性"].map((name, i) => (
              <li key={name} className="flex h-[18px] items-center pr-[3px] pl-[11px]">
                <span className="w-2.5">
                  {i === 2 && (
                    <svg width="6" height="10" viewBox="0 0 6 10" fill="#fff" stroke="#606060">
                      <path d="M.5 1v8L5 5z" />
                    </svg>
                  )}
                </span>
                <FolderIcon />
                <span className="flex-1">{name}</span>
                {i < 2 ? (
                  <button aria-label="新建样式" className="flex size-3.5 items-center justify-center bg-[#009a3d]">
                    <Icon size={10} color="#fff" crisp>
                      <path d="M8 0v16M0 8h16" strokeWidth="2.500" />
                    </Icon>
                  </button>
                ) : (
                  <button aria-label="还原">
                    <Icon size={14}>
                      <path d="M5 4 1 8l5 6 6-3V6L8 5zM4 1v5M8 1v4" />
                      <path d="M10 2c6-2 7 5 2 5" stroke="#f02020" strokeWidth="1.300" />
                    </Icon>
                  </button>
                )}
              </li>
            ))}
          </ul>
          <div className="flex h-2 shrink-0 items-center justify-center gap-0.5">
            <i className="size-0.5 bg-[#b0b0b0]" />
            <i className="size-0.5 bg-[#b0b0b0]" />
            <i className="size-0.5 bg-[#b0b0b0]" />
          </div>
          <div className="flex h-[35px] shrink-0 items-start gap-[3px] border-b border-[#d0d0d0] pt-px pr-[3px] pl-2 text-[13px] leading-5">
            <button aria-label="样式选项" className="relative mt-1 mr-auto h-5 w-5">
              <Icon>
                <path d="M.5 8.500h6v6h-6zM2 11.500h3M3.500 10v3" />
                <path d="m7 3 4-2 4.500 5-4 4L7 7.500zM7 3C5 1.500 4 5 7 6" />
              </Icon>
              <Corner />
            </button>
            <button className="h-6 w-[97px] border border-[#adadad] bg-[#e9e9e9]">从选定内容</button>
            <button disabled className="h-6 w-[123px] border border-[#cfcfcf] text-[#cfcfcf]">
              应用于选定对象
            </button>
          </div>
        </div>
        <div className="ml-px flex w-[21px] shrink-0 flex-col items-center border-l border-[#adadad] bg-[#e9e9e9]">
          <button className="flex h-[99px] w-full flex-col items-center gap-2 bg-[#b0b0b0] pt-1">
            <TagIcon />
            <span className="text-[13px] leading-4 [text-orientation:sideways] [writing-mode:vertical-rl]">对象样式</span>
          </button>
          <button aria-label="添加泊坞窗" className="mt-1.5">
            <PlusIcon />
          </button>
        </div>
      </div>
    </aside>
  );
}

function Palette({ colors, dim }: { colors: string[]; dim?: boolean }) {
  return (
    <div className="flex w-[21px] shrink-0 flex-col items-center border-l border-[#d0d0d0] pt-0.5">
      <Grip className="h-1.5 w-4" />
      <span className="flex h-[18px] items-center">
        <Triangle />
      </span>
      <span className="flex h-5 items-center">
        {dim ? <Dropper color="#b8b8b8" tip="#d8d8d8" size={13} /> : <Dropper size={13} />}
      </span>
      <span className="flex h-[18px] items-center pb-0.5">
        <Chevron d="up" color="#cfcfcf" />
      </span>
      <div className="flex min-h-0 flex-1 flex-col overflow-hidden">
        <button aria-label="无" className="h-[18px] w-[18px] shrink-0 border border-[#555] bg-white">
          <NoneMark />
        </button>
        {colors.map((c) => (
          <button key={c} aria-label={c} className="h-[17px] w-[18px] shrink-0 border border-t-0 border-[#555]" style={{ background: c }} />
        ))}
      </div>
      <span className="flex h-[42px] shrink-0 flex-col items-center gap-1.5 pt-0.5">
        <Chevron d="down" color={dim ? "#a0a0a0" : "#cfcfcf"} />
        <Chevron d="double" color="#b0b0b0" />
      </span>
    </div>
  );
}

function StatusBar() {
  return (
    <footer className="flex h-9 shrink-0 items-center border-t border-[#d0d0d0] pt-0.5 pl-2.5 leading-5">
      <button aria-label="选项" className="relative mr-1.5 flex h-5 w-5">
        <GearIcon size={18} />
        <Corner />
      </button>
      <span className="whitespace-nowrap">
        <Mixed text="单击对象两次可旋转/倾斜；双击工具可选择所有对象；按住 Shift 键单击可选择多个对象；按住 Alt 键单击可进行挖掘；按住 Ctrl 并单击可在组中选择" />
      </span>
      <span className="ml-[26px] whitespace-nowrap">
        <Mixed text="導線 于 辅助线" />
      </span>
      <div className="ml-auto flex w-[203px] items-center">
        <BucketIcon />
        <span className="size-[22px] border border-[#adadad] bg-white">
          <svg width="20" height="20" viewBox="0 0 20 20" stroke="#d01020" strokeWidth="1.500">
            <path d="M0 20 20 0" />
          </svg>
        </span>
        <span className="ml-1">
          <Mixed text="无" />
        </span>
      </div>
      <div className="flex w-[248px] items-center">
        <PenIcon />
        <span className="mr-1 size-[22px] border border-[#adadad] bg-[#00f]" />
        <span className="whitespace-pre">R:   0 G:   0 B:   255 (#0000...</span>
      </div>
      <div className="flex h-7 w-[37px] items-center border-l border-[#d0d0d0] pl-2.5">
        <Icon crisp>
          <path d="M.5.5h15v13H.5z" fill="#fff" />
          <path d="M2 2h12v5H2z" fill="#f00" stroke="none" />
          <path d="M2 7h12v4H2z" fill="#00a0e9" stroke="none" />
          <circle cx="8" cy="6.500" r="2.500" fill="#8aa" />
          <path d="M2 15.500h12" />
        </Icon>
      </div>
    </footer>
  );
}

function Watermark() {
  return (
    <div className="pointer-events-none absolute right-3 bottom-2 flex items-center opacity-80">
      <svg width="44" height="42" viewBox="0 0 44 42">
        <path d="M42 2C20 0 0 14 2 30c1 5 3 7 6 8-6-16 12-32 34-36z" fill="#4a9fe0" />
        <path d="M12 37c16 2 30-6 28-18 6 14-10 26-28 18z" fill="#3fb878" />
        <path d="M10 33c-2-12 12-20 20-14 8 7-4 15-10 11 10-2 6-11-1-8-5 2-8 6-9 11z" fill="#48a8c8" />
        <path d="M4 38c6 3 14 1 18-2-4 4-12 6-18 2z" fill="#f5c518" stroke="#f5c518" />
      </svg>
      <div className="flex flex-col">
        <span className="text-[21px] leading-6 font-bold text-[#3a8ad0]">极光下载站</span>
        <span className="text-[15px] leading-4 font-bold text-[#43b86e]">www.xz7.com</span>
      </div>
    </div>
  );
}

export default function App() {
  return (
    <div className="relative flex h-screen flex-col overflow-hidden bg-[#f3f3f3] font-['Noto_Sans','Noto_Sans_CJK_SC',sans-serif] text-[12px] text-black">
      <TitleBar />
      <nav className="flex h-[22px] shrink-0 items-center gap-6 bg-[#d9d9d9] pb-0.5 pl-[11px] leading-5">
        {MENUS.map(([label, accel]) => (
          <button key={label} className="whitespace-nowrap">
            <Accel label={label} accel={accel} />
          </button>
        ))}
      </nav>
      <StandardBar />
      <PropertyBar />
      <div className="flex min-h-0 flex-1">
        <Toolbox />
        <Workspace />
        <ObjectStyles />
        <Palette colors={PALETTE} dim />
        <Palette colors={[]} />
      </div>
      <StatusBar />
      <div className="absolute right-[604px] bottom-[58px] flex h-[26px] w-[61px] items-center justify-center gap-1 rounded-md border border-[#888] bg-white leading-none text-[#303030] shadow-[0_1px_3px_rgba(0,0,0,0.7)]">
        <span>CH</span>
        <svg width="11" height="12" viewBox="0 0 11 12" fill="none" stroke="#303030">
          <path d="M5 .5c7 2 6 11-4 9.500C6 9 7.500 5 5 .5z" />
        </svg>
        <span className="text-[13px]">简</span>
      </div>
      <Watermark />
    </div>
  );
}
